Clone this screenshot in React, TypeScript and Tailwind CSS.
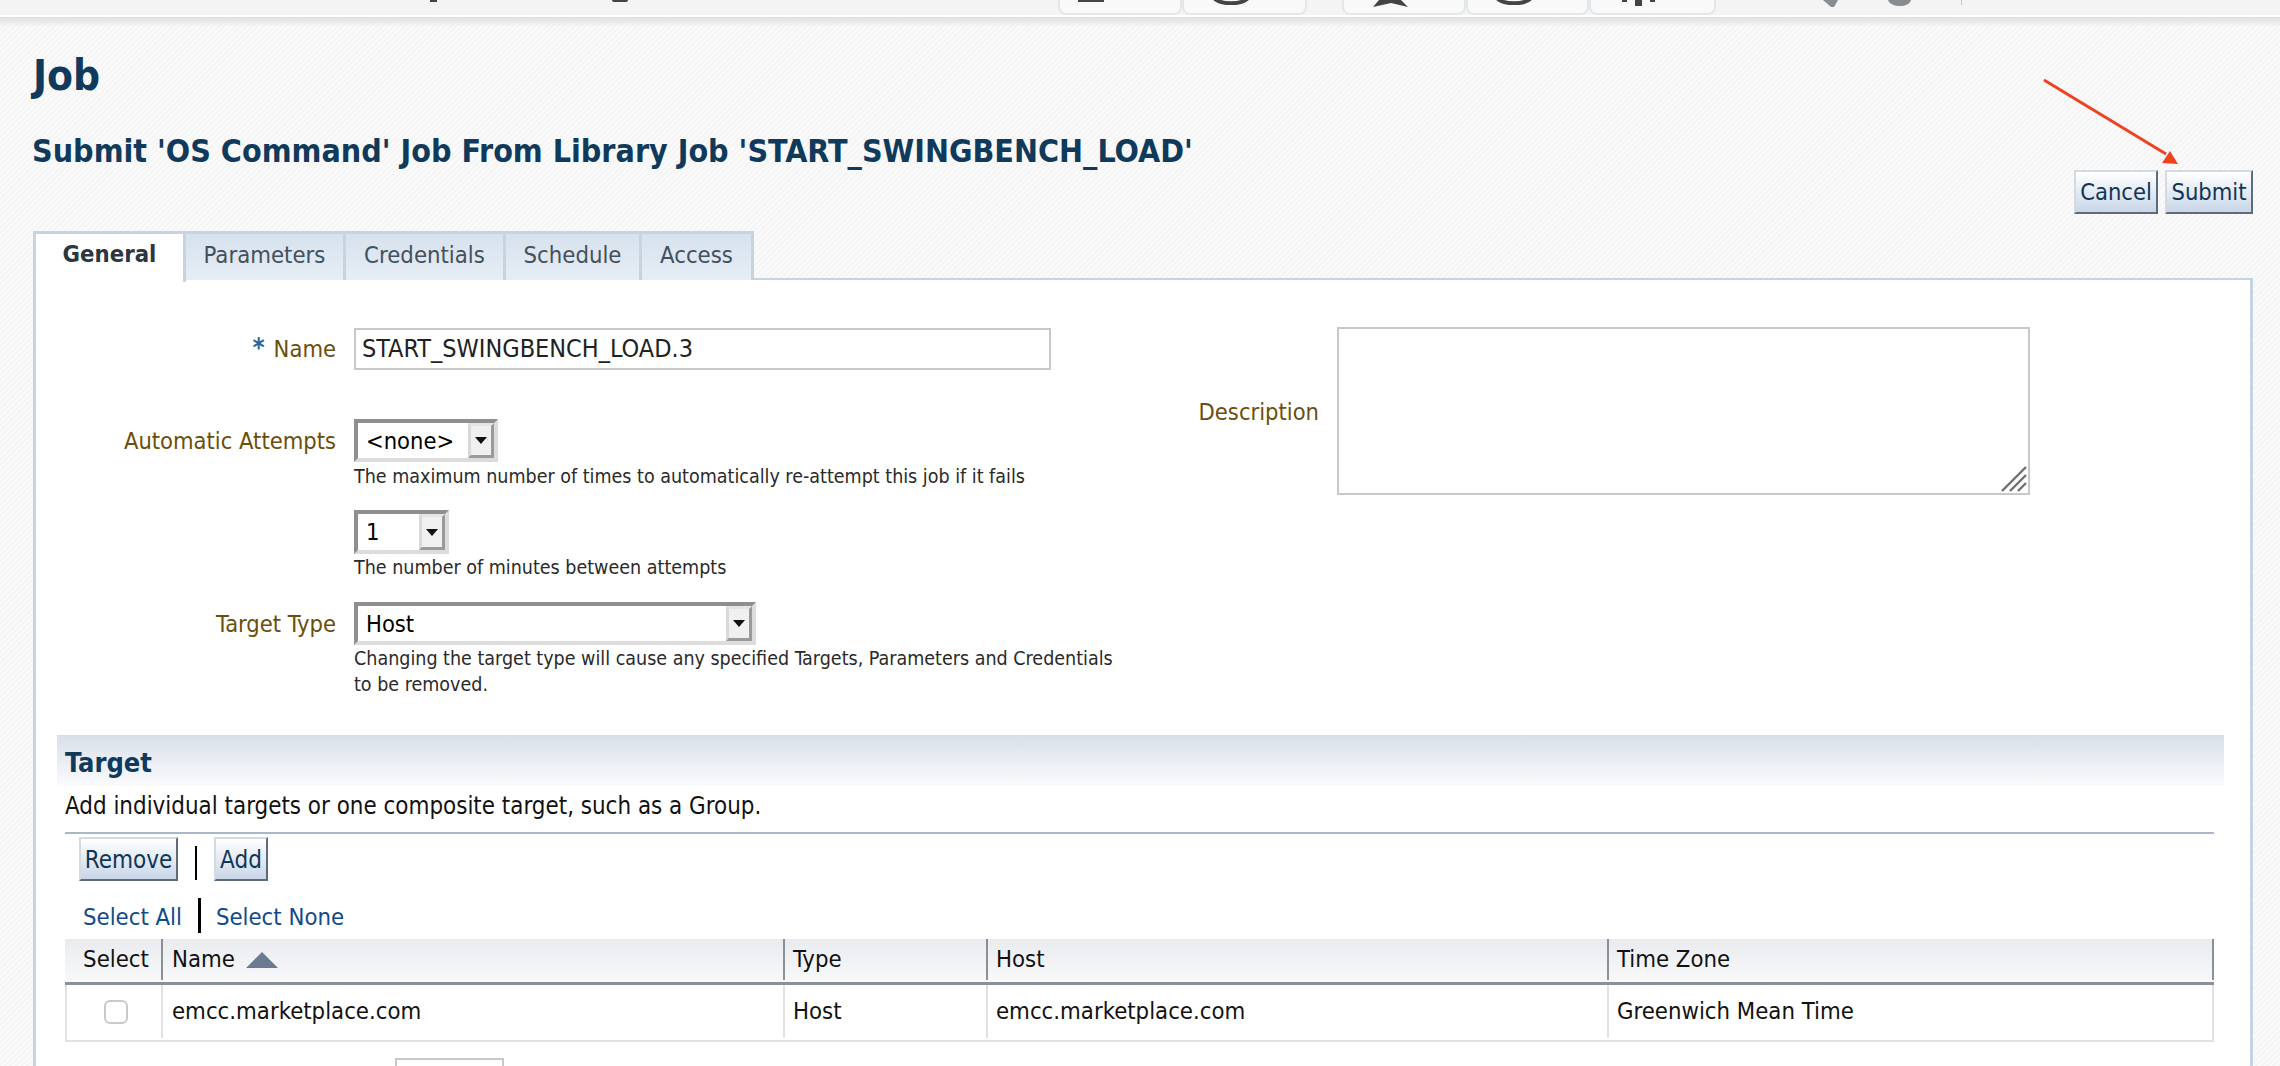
import React from 'react';

const tabs = [
  { label: 'General', width: 'w-[153px]', active: true },
  { label: 'Parameters', width: 'w-[160px]', active: false },
  { label: 'Credentials', width: 'w-[160px]', active: false },
  { label: 'Schedule', width: 'w-[136px]', active: false },
  { label: 'Access', width: 'w-[112px]', active: false },
];

const buttonStyle =
  'flex h-[44px] items-center justify-center border-2 border-t-[#d3dae2] border-l-[#d3dae2] border-r-[#5d6b7c] border-b-[#5d6b7c] bg-gradient-to-b from-white to-[#c9d6e8] pt-[2px] text-[#0f3557]';

const FakeSelect = ({ value, width, height }: { value: string; width: string; height: string }) => (
  <div className={`${width} ${height} flex border-4 border-t-[#8f8f8f] border-l-[#8f8f8f] border-r-[#dcdcdc] border-b-[#dcdcdc] bg-white`}>
    <span className="flex-1 pl-[8px] text-[23.5px] leading-[37px] text-black">{value}</span>
    <span className="flex w-[26px] items-center justify-center border-[3px] border-t-[#e4e4e4] border-l-[#d9d9d9] border-r-[#9a9a9a] border-b-[#9a9a9a] bg-[#f0f0f0]">
      <svg width="14" height="9" viewBox="0 0 14 9">
        <polygon points="1,1 13,1 7,8" fill="#111" />
      </svg>
    </span>
  </div>
);

const TopTab = ({ width, children }: { width: string; children?: React.ReactNode }) => (
  <div className={`${width} h-[15px] overflow-hidden rounded-b-lg border-x-2 border-b-2 border-[#e3e7ea] bg-[#f9f9f9]`}>
    {children}
  </div>
);

export default function App() {
  return (
    <div className="relative h-[1066px] w-[2280px] overflow-hidden bg-[#f8f8f8] bg-[repeating-linear-gradient(135deg,#f5f5f5_0px,#f5f5f5_2px,#fafafa_2px,#fafafa_4px)] [font-family:'DejaVu_Sans_Condensed','DejaVu_Sans',sans-serif]">
      {/* browser toolbar, mostly cropped away */}
      <div className="flex h-[15px] bg-[#f4f4f4]">
        <div className="ml-[430px] h-[2px] w-[7px] bg-[#444]" />
        <div className="ml-[175px] h-[2px] w-[16px] rounded-b-full bg-[#444]" />
        <div className="ml-[430px] flex">
          <TopTab width="w-[124px]">
            <div className="ml-[18px] h-[2px] w-[26px] bg-[#444]" />
          </TopTab>
          <TopTab width="w-[125px]">
            <svg className="ml-[28px]" width="40" height="5" viewBox="0 0 40 5">
              <path d="M2 -2 C8 5 30 5 36 -2" fill="none" stroke="#444" strokeWidth="4" />
            </svg>
          </TopTab>
        </div>
        <div className="ml-[35px] flex">
          <TopTab width="w-[124px]">
            <svg className="ml-[29px]" width="36" height="7" viewBox="0 0 36 7">
              <path d="M6 0 L0 7 L18 3 L35 7 L28 0 Z" fill="#444" />
            </svg>
          </TopTab>
          <TopTab width="w-[123px]">
            <svg className="ml-[27px]" width="40" height="5" viewBox="0 0 40 5">
              <path d="M2 -2 C8 5 30 5 36 -2" fill="none" stroke="#444" strokeWidth="4" />
            </svg>
          </TopTab>
          <TopTab width="w-[127px]">
            <svg className="ml-[30px]" width="36" height="7" viewBox="0 0 36 7">
              <rect x="14" y="0" width="7" height="6" fill="#444" />
              <rect x="1" y="0" width="5" height="2" fill="#444" />
              <rect x="29" y="0" width="5" height="2" fill="#444" />
            </svg>
          </TopTab>
        </div>
        <svg className="ml-[107px]" width="16" height="8" viewBox="0 0 16 8">
          <path d="M0 0 H15 L11 7 H8 Z" fill="#868d93" />
        </svg>
        <svg className="ml-[49px]" width="24" height="7" viewBox="0 0 24 7">
          <path d="M0 0 H23 C21 8 3 8 0 0 Z" fill="#868d93" />
        </svg>
        <div className="ml-[49px] h-[5px] w-px bg-[#b9cbe0]" />
      </div>
      <div className="h-[2px] bg-white" />
      <div className="h-[10px] bg-gradient-to-b from-[#dfdfdf] to-transparent" />

      {/* page header */}
      <div className="flex h-[204px] justify-between pl-[32px] pr-[27px]">
        <div>
          <h1 className="ml-[1px] mt-[27px] text-[42px] font-bold leading-[44px] text-[#0f3a5c]">Job</h1>
          <h2 className="mt-[34px] text-[31.9px] font-bold leading-[38px] text-[#0f3a5c]">
            Submit 'OS Command' Job From Library Job 'START_SWINGBENCH_LOAD'
          </h2>
        </div>
        <div className="mt-[143px] flex h-[44px] gap-[7px]">
          <button className={`${buttonStyle} w-[84px] text-[23.5px]`}>Cancel</button>
          <button className={`${buttonStyle} w-[88px] text-[23.5px]`}>Submit</button>
        </div>
      </div>

      {/* tabs */}
      <div className="relative z-10 ml-[33px] flex h-[49px]">
        {tabs.map(tab => (
          <div
            key={tab.label}
            className={`${tab.width} flex items-center justify-center border-t-[3px] border-r-[3px] border-[#c5d3e2] text-[23.7px] ${
              tab.active
                ? 'h-[51px] border-l-[3px] bg-white pb-[7px] font-bold text-[#2c3640]'
                : 'bg-gradient-to-b from-[#d7e2ee] to-[#e6edf5] pb-[2px] text-[#44505c]'
            }`}
          >
            {tab.label}
          </div>
        ))}
      </div>

      {/* panel */}
      <div className="-mt-[2px] ml-[33px] mr-[27px] h-[788px] border-[3px] border-b-0 border-t-2 border-[#c5d3e2] bg-white">
        <div className="flex">
          <div className="w-[1162px] pt-[48px]">
            <div className="flex h-[42px] items-center">
              <div className="w-[300px] pt-[2px] text-right text-[23.5px] text-[#6b4e0a]">
                <span className="mr-[9px] text-[26px] font-bold leading-[20px] text-[#2b6598]">*</span>Name
              </div>
              <div className="ml-[18px] flex h-[42px] w-[697px] items-center border-2 border-[#c8c8c8] pl-[6px] text-[25px] text-[#222]">
                START_SWINGBENCH_LOAD.3
              </div>
            </div>

            <div className="mt-[49px] flex">
              <div className="w-[300px] pt-[5px] text-right text-[23.5px] leading-[35px] text-[#6b4e0a]">Automatic Attempts</div>
              <div className="ml-[18px]">
                <FakeSelect value="<none>" width="w-[144px]" height="h-[43px]" />
                <p className="mt-[2px] text-[19.5px] leading-[26px] text-[#2a2a2a]">
                  The maximum number of times to automatically re-attempt this job if it fails
                </p>
              </div>
            </div>

            <div className="ml-[318px] mt-[20px]">
              <FakeSelect value="1" width="w-[95px]" height="h-[44px]" />
              <p className="mt-[1px] text-[19.5px] leading-[26px] text-[#2a2a2a]">The number of minutes between attempts</p>
            </div>

            <div className="mt-[21px] flex">
              <div className="w-[300px] pt-[5px] text-right text-[23.5px] leading-[35px] text-[#6b4e0a]">Target Type</div>
              <div className="ml-[18px]">
                <FakeSelect value="Host" width="w-[402px]" height="h-[43px]" />
                <p className="mt-[1px] w-[770px] text-[19.5px] leading-[26px] text-[#2a2a2a]">
                  Changing the target type will cause any specified Targets, Parameters and Credentials to be removed.
                </p>
              </div>
            </div>
          </div>

          <div className="flex items-start pt-[47px]">
            <div className="mt-[68px] w-[121px] text-right text-[23.5px] leading-[35px] text-[#6b4e0a]">Description</div>
            <div className="relative ml-[18px] h-[168px] w-[693px] border-2 border-[#c8c8c8] bg-white">
              <svg className="absolute bottom-[1px] right-[1px]" width="26" height="26" viewBox="0 0 26 26">
                <path d="M1 25 L25 1 M9 25 L25 9 M17 25 L25 17" stroke="#6f6f6f" strokeWidth="2.4" fill="none" />
              </svg>
            </div>
          </div>
        </div>

        {/* target section */}
        <div className="ml-[21px] mr-[26px] mt-[37px] flex h-[51px] items-center bg-gradient-to-b from-[#d9dfe9] to-[#fafbfc] pl-[8px] pt-[5px] text-[27px] font-bold text-[#0f3a5c]">
          Target
        </div>
        <div className="ml-[29px] mr-[36px]">
          <p className="pt-[4px] text-[23.9px] leading-[32px] text-[#111]">Add individual targets or one composite target, such as a Group.</p>
          <div className="mt-[10px] h-[2px] bg-[#a9b7cc]" />

          <div className="mt-[3px] flex items-center pl-[14px]">
            <button className={`${buttonStyle} w-[99px] text-[24px]`}>Remove</button>
            <div className="ml-[17px] mt-[7px] h-[34px] w-[2px] bg-black" />
            <button className={`${buttonStyle} ml-[17px] w-[54px] text-[24px]`}>Add</button>
          </div>

          <div className="mt-[17px] flex h-[35px] items-center pl-[18px] text-[23.7px] text-[#0f4a8a]">
            <span className="pt-[5px]">Select All</span>
            <span className="ml-[16px] h-[35px] w-[3px] bg-black" />
            <span className="ml-[15px] pt-[5px]">Select None</span>
          </div>

          <div className="mt-[6px] flex h-[46px] border-b-[3px] border-[#8a9098] bg-gradient-to-b from-[#e9ebef] to-[#f8f9fa] pb-[2px] text-[23.7px] text-[#111]">
            <div className="flex w-[98px] items-center justify-center border-r-2 border-[#8a9098] pl-[6px]">Select</div>
            <div className="flex w-[622px] items-center gap-[10px] border-r-2 border-[#8a9098] pl-[9px]">
              Name
              <svg width="34" height="18" viewBox="0 0 34 18">
                <polygon points="17,1 33,17 1,17" fill="#6b7a90" />
              </svg>
            </div>
            <div className="flex w-[203px] items-center border-r-2 border-[#8a9098] pl-[8px]">Type</div>
            <div className="flex w-[621px] items-center border-r-2 border-[#8a9098] pl-[8px]">Host</div>
            <div className="flex flex-1 items-center border-r-2 border-[#8a9098] pl-[8px]">Time Zone</div>
          </div>
          <div className="flex h-[57px] border-x-2 border-b-2 border-[#e2e2e2] pb-[2px] text-[23.7px] text-[#111]">
            <div className="flex w-[96px] items-center justify-center border-r-2 border-[#e2e2e2] pl-[3px]">
              <div className="h-[24px] w-[24px] rounded-[6px] border-2 border-[#c9c9c9] bg-white" />
            </div>
            <div className="flex w-[622px] items-center border-r-2 border-[#e2e2e2] pl-[9px]">emcc.marketplace.com</div>
            <div className="flex w-[203px] items-center border-r-2 border-[#e2e2e2] pl-[8px]">Host</div>
            <div className="flex w-[621px] items-center border-r-2 border-[#e2e2e2] pl-[8px]">emcc.marketplace.com</div>
            <div className="flex flex-1 items-center pl-[8px]">Greenwich Mean Time</div>
          </div>
          <div className="ml-[330px] mt-[16px] h-[20px] w-[109px] border-2 border-[#c8c8c8]" />
        </div>
      </div>

      {/* red annotation arrow */}
      <svg className="absolute left-[2040px] top-[76px]" width="142" height="92" viewBox="0 0 142 92">
        <line x1="4" y1="4" x2="126" y2="78" stroke="#ee4220" strokeWidth="3" />
        <polygon points="138,88 130,75 122,87" fill="#ee4220" />
      </svg>
    </div>
  );
}
